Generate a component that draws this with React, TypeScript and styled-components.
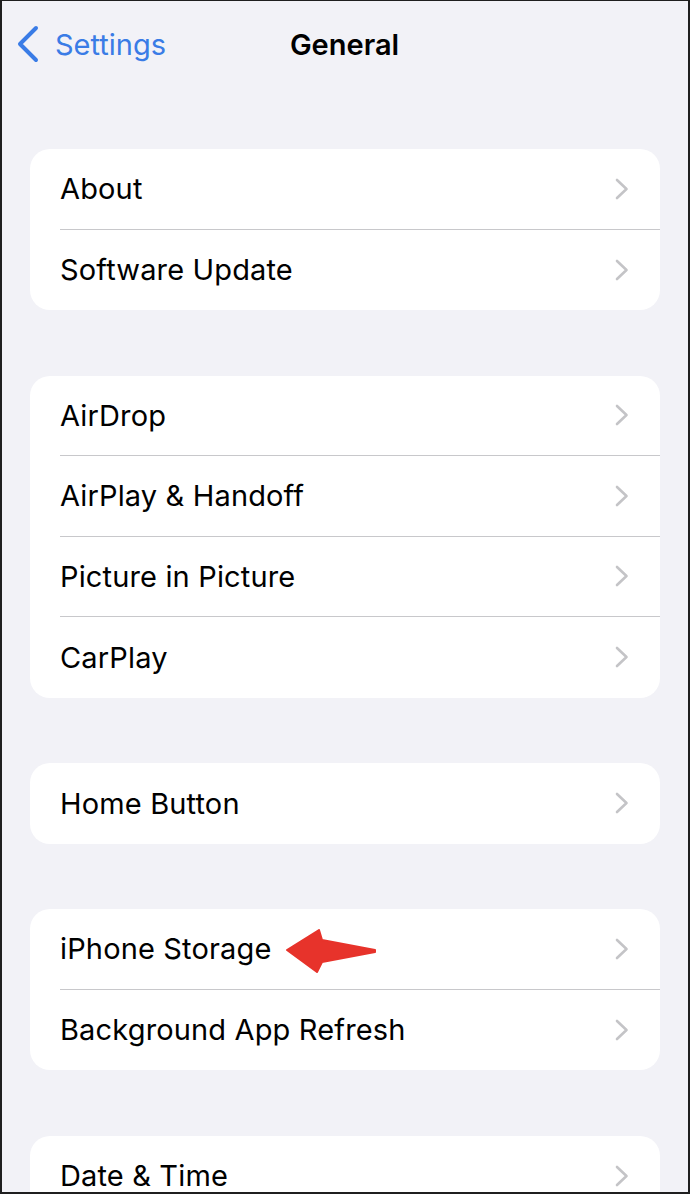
import React from "react";
import styled, { createGlobalStyle } from "styled-components";

const Global = createGlobalStyle`
  html, body { margin: 0; padding: 0; background: #f2f2f7; }
  * { box-sizing: border-box; }
`;

const Screen = styled.div`
  width: 690px;
  height: 1194px;
  overflow: hidden;
  background: #f2f2f7;
  border-top: 1px solid #1f1f1f;
  border-left: 2px solid #1f1f1f;
  border-right: 2px solid #1f1f1f;
  border-bottom: 2px solid #1f1f1f;
  font-family: Inter, "Liberation Sans", sans-serif;
  display: flex;
  flex-direction: column;
`;

const NavBar = styled.div`
  flex-shrink: 0;
  height: 88px;
  display: grid;
  grid-template-columns: 1fr auto 1fr;
  align-items: center;
  padding-left: 15px;
`;

const Back = styled.div`
  display: flex;
  align-items: center;
  gap: 16px;
  color: #3a7ce6;
  font-size: 29px;
  margin-top: -2px;
`;

const Title = styled.div`
  font-size: 29px;
  font-weight: 600;
  color: #000;
  margin-top: -2px;
  margin-left: -16px;
`;

const List = styled.div`
  flex-shrink: 0;
  display: flex;
  flex-direction: column;
  gap: 65.5px;
  padding: 60px 28px 0 28px;
`;

const Card = styled.div`
  background: #fff;
  border-radius: 20px;
  overflow: hidden;
`;

const Row = styled.div`
  height: 80.5px;
  padding-left: 30px;
  display: flex;
  align-items: center;
`;

const RowInner = styled.div<{ $last?: boolean }>`
  flex: 1;
  height: 100%;
  display: flex;
  align-items: center;
  justify-content: space-between;
  padding-right: 31px;
  border-bottom: ${(p) => (p.$last ? "none" : "1px solid #c8c8cb")};
`;

const Label = styled.div`
  font-size: 29px;
  letter-spacing: 0.15px;
  color: #000;
  display: flex;
  align-items: center;
  gap: 15px;
`;

const Chevron = () => (
  <svg width="14" height="22" viewBox="0 0 14 22">
    <path d="M2 2 L11.5 11 L2 20" fill="none" stroke="#c4c4c7" strokeWidth="2.6" strokeLinecap="round" strokeLinejoin="round" />
  </svg>
);

const BackChevron = () => (
  <svg width="22" height="38" viewBox="0 0 22 38">
    <path d="M19 3 L3 19 L19 35" fill="none" stroke="#3a7ce6" strokeWidth="4" strokeLinecap="round" strokeLinejoin="round" />
  </svg>
);

const Arrow = () => (
  <svg width="92" height="44" viewBox="0 0 92 44" style={{ marginTop: 4 }}>
    <path
      d="M1 21 L33 1 L36 11 L89 21 L89 23 L36 33 L31 43 Z"
      fill="#e7332b"
      stroke="#e7332b"
      strokeWidth="2"
      strokeLinejoin="round"
    />
  </svg>
);

const sections: { label: string; arrow?: boolean }[][] = [
  [{ label: "About" }, { label: "Software Update" }],
  [{ label: "AirDrop" }, { label: "AirPlay & Handoff" }, { label: "Picture in Picture" }, { label: "CarPlay" }],
  [{ label: "Home Button" }],
  [{ label: "iPhone Storage", arrow: true }, { label: "Background App Refresh" }],
  [{ label: "Date & Time" }],
];

export default function App() {
  return (
    <>
      <Global />
      <Screen>
        <NavBar>
          <Back>
            <BackChevron />
            <span>Settings</span>
          </Back>
          <Title>General</Title>
          <div />
        </NavBar>
        <List>
          {sections.map((sec, i) => (
            <Card key={i}>
              {sec.map((r, j) => (
                <Row key={r.label}>
                  <RowInner $last={j === sec.length - 1}>
                    <Label>
                      {r.label}
                      {r.arrow && <Arrow />}
                    </Label>
                    <Chevron />
                  </RowInner>
                </Row>
              ))}
            </Card>
          ))}
        </List>
      </Screen>
    </>
  );
}
